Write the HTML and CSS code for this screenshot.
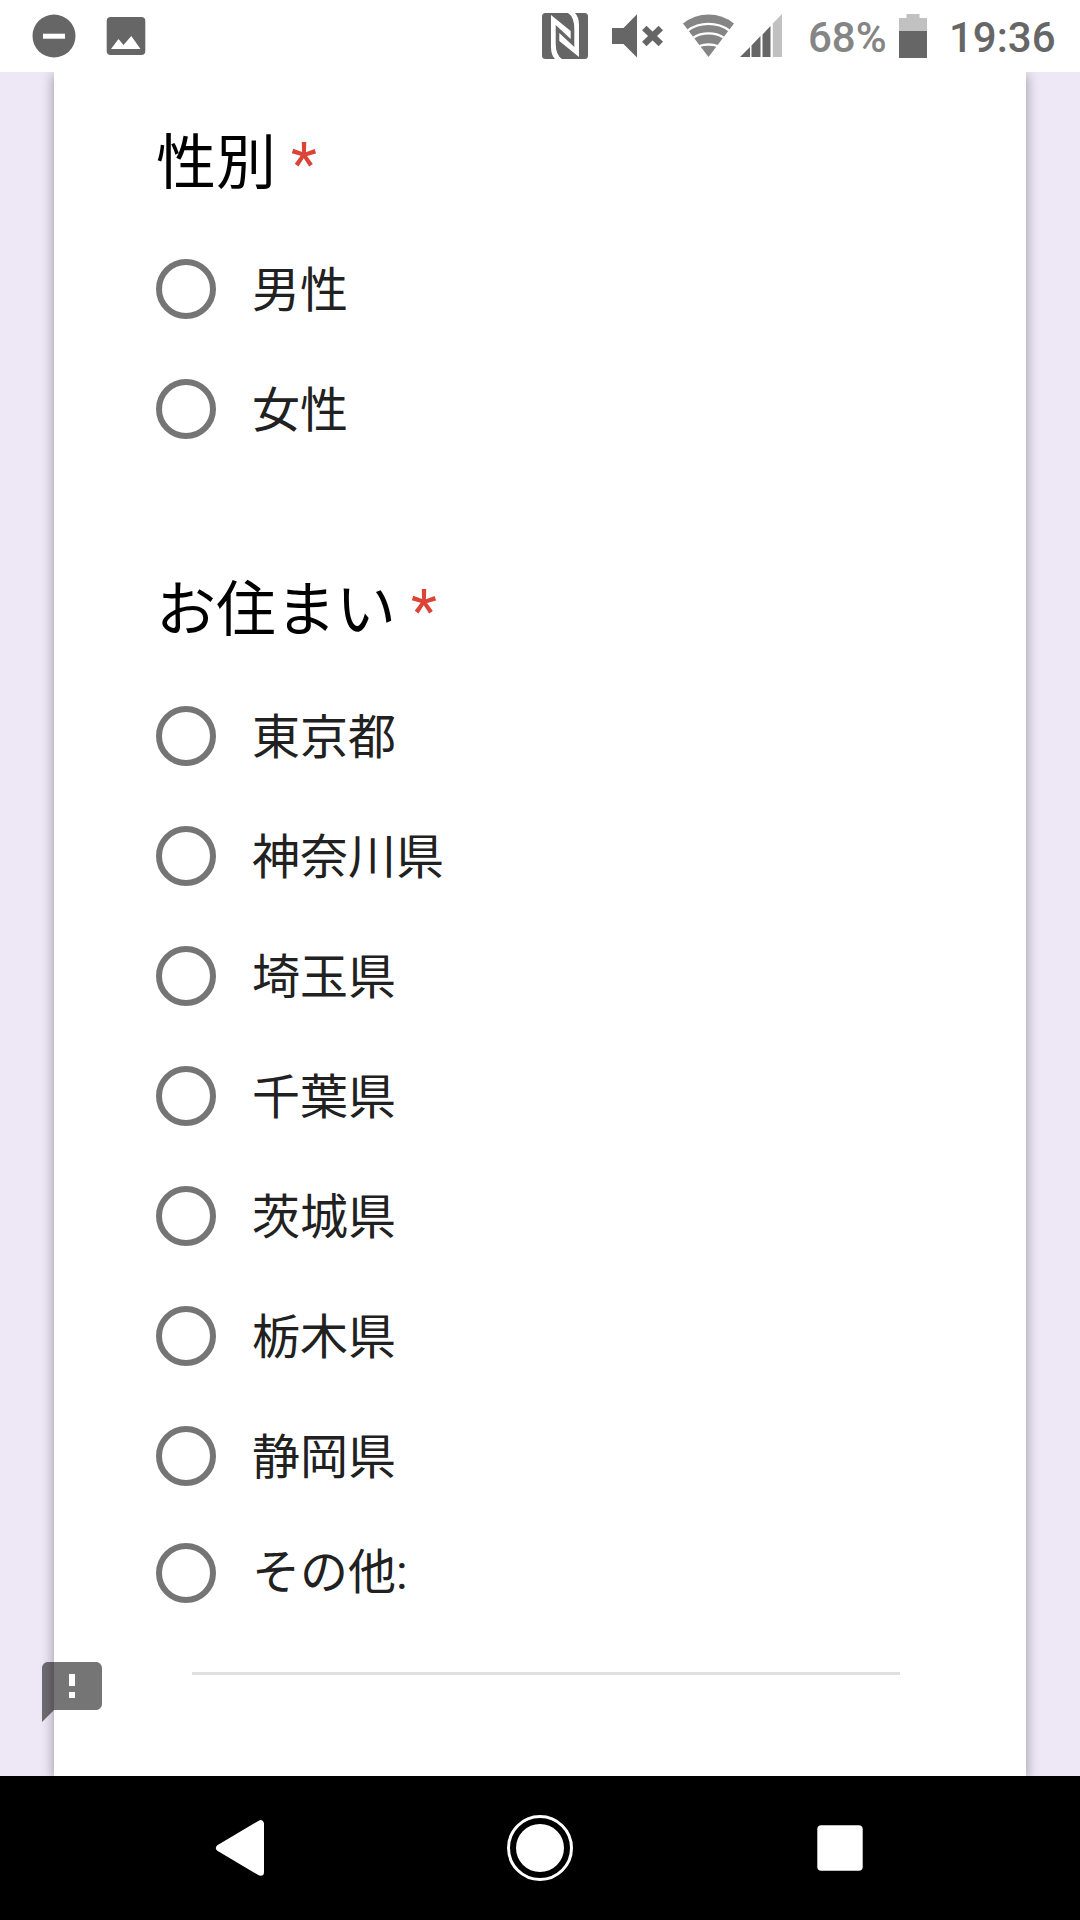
FILE: index.html
```html
<!DOCTYPE html>
<html lang="ja">
<head>
<meta charset="utf-8">
<title>アンケート</title>
<link rel="stylesheet" href="styles.css">
</head>
<body>
<header class="status">
  <svg class="dnd" width="44" height="44" viewBox="0 0 44 44"><circle cx="22" cy="22" r="21.5" fill="#666"/><path d="M11 19.7h22v5H11z" fill="#fff"/></svg>
  <svg class="photo" width="40" height="40" viewBox="0 0 40 40"><rect x=".7" y="1" width="38.6" height="38" rx="4" fill="#666"/><path d="M5 33l7.500-10 5 6L25.300 20 34.500 33z" fill="#fff"/></svg>
  <svg class="nfc" width="46" height="46" viewBox="0 0 46 46"><rect width="46" height="46" rx="3.5" fill="#666"/><path d="M9 2L28.700 18V26L13.700 12V30Q13.700 42 20 46H13Q9 42 9 34zM37 44L17.300 28V20L32.300 34V16Q32.300 4 26 0H33Q37 4 37 12z" fill="#fff"/></svg>
  <svg class="mute" width="52" height="44" viewBox="0 0 52 44"><path d="M0 14h11.500L25 .3V43.500L11.500 30H0z" fill="#666"/><path d="M32.300 14l16.500 16M48.800 14L32.300 30" stroke="#666" stroke-width="6.300"/></svg>
  <svg class="wifi" width="52" height="44" viewBox="0 0 52 44"><path d="M25.500 43L0 9.500Q11.500.5 25.500 .5T51 9.500z" fill="#858585"/><path d="M4.700 16.500Q13.500 9.800 25.500 9.800T46.300 16.500M10.500 23.500Q16.500 19.400 25.500 19.400T40.500 23.500M16.500 32Q20.500 30.500 25.500 30.500T34.500 32" fill="none" stroke="#fff" stroke-width="2.300"/></svg>
  <svg class="signal" width="42" height="43" viewBox="0 0 42 43"><path d="M0 43L10 33V43zM11.500 31.500L20.500 22V43h-9zM22.500 20.500L30.500 12V43h-8z" fill="#666"/><path d="M32.800 9.500L42 0V43h-9.200z" fill="#c1c1c1"/></svg>
  <span class="percent">68%</span>
  <svg class="battery" width="28" height="44" viewBox="0 0 28 44"><path d="M7.500 0h13v4H28v14H0V4h7.500z" fill="#c1c1c1"/><path d="M0 17h28v27H0z" fill="#666"/></svg>
  <span class="clock">19:36</span>
</header>
<main class="page">
  <form class="card">
    <section class="question">
      <h2 class="title">性別 <span class="required">*</span></h2>
      <div class="option"><span class="radio"></span><span class="label">男性</span></div>
      <div class="option"><span class="radio"></span><span class="label">女性</span></div>
    </section>
    <section class="question">
      <h2 class="title">お住まい <span class="required">*</span></h2>
      <div class="option"><span class="radio"></span><span class="label">東京都</span></div>
      <div class="option"><span class="radio"></span><span class="label">神奈川県</span></div>
      <div class="option"><span class="radio"></span><span class="label">埼玉県</span></div>
      <div class="option"><span class="radio"></span><span class="label">千葉県</span></div>
      <div class="option"><span class="radio"></span><span class="label">茨城県</span></div>
      <div class="option"><span class="radio"></span><span class="label">栃木県</span></div>
      <div class="option"><span class="radio"></span><span class="label">静岡県</span></div>
      <div class="option other"><span class="radio"></span><span>その他:</span></div>
      <div class="other-line"></div>
    </section>
  </form>
  <svg class="feedback" width="72" height="72" viewBox="0 0 24 24"><path d="M11 6h2v4h-2zM11 12h2v2h-2z" fill="#fff"/><path d="M20 2H4c-1.100 0-2 .9-2 2v18l4-4h14c1.100 0 2-.9 2-2V4c0-1.100-.9-2-2-2zm-7 12h-2v-2h2v2zm0-4h-2V6h2v4z" fill="#000" fill-opacity=".54"/></svg>
</main>
<nav class="nav">
  <svg width="66" height="66" viewBox="0 0 66 66"><path d="M12.500 33L53.500 8.700V57.300z" fill="#fff" stroke="#fff" stroke-width="7" stroke-linejoin="round"/></svg>
  <svg width="66" height="66" viewBox="0 0 66 66"><circle cx="33" cy="33" r="31.500" fill="none" stroke="#fff" stroke-width="3"/><circle cx="33" cy="33" r="24" fill="#fff"/></svg>
  <svg width="66" height="66" viewBox="0 0 66 66"><rect x="10.300" y="10.300" width="45.400" height="45.400" rx="4" fill="#fff"/></svg>
</nav>
</body>
</html>
```
FILE: styles.css
```css
* { box-sizing: border-box; }
body {
  margin: 0;
  width: 1080px;
  height: 1920px;
  display: flex;
  flex-direction: column;
  overflow: hidden;
  background: #ede7f6;
  font-family: Roboto, "Noto Sans CJK JP", sans-serif;
}
svg { display: block; flex: none; }

.status {
  position: relative;
  z-index: 1;
  flex: none;
  display: flex;
  align-items: flex-start;
  height: 72px;
  padding: 14px 0 0 32px;
  background: #fff;
  font-size: 42px;
  font-weight: 500;
  line-height: 48px;
  white-space: nowrap;
}
.photo { margin: 2px 0 0 30px; }
.nfc { margin: -1px 0 0 396px; }
.mute { margin-left: 24px; }
.wifi { margin-left: 19px; }
.signal { margin-left: 5px; }
.percent { width: 91px; margin-left: 26px; color: #858585; }
.clock { margin-left: 22px; color: #666; }

.page {
  position: relative;
  flex: 1;
  padding: 0 54px;
  overflow: hidden;
}
.card {
  height: 100%;
  padding: 43px 102px 0;
  background: #fff;
  box-shadow: 0 3px 12px rgba(0, 0, 0, .37);
}
.question { margin-bottom: 93px; }
.title {
  height: 114px;
  margin: 0;
  padding-top: 4px;
  font-size: 60px;
  font-weight: 400;
  line-height: 90px;
  color: #000;
}
.required { color: #db4437; }
.option {
  display: flex;
  align-items: center;
  gap: 36px;
  height: 120px;
  font-size: 48px;
  line-height: 72px;
  color: #212121;
}
.label { padding-top: 3px; }
.radio {
  width: 60px;
  height: 60px;
  border: 6px solid #757575;
  border-radius: 50%;
}
.other { height: 114px; }
.other-line {
  height: 3px;
  margin: 42px 24px 0 36px;
  background: #e0e0e0;
}
.feedback { position: absolute; left: 36px; top: 1584px; }

.nav {
  flex: none;
  display: flex;
  align-items: center;
  justify-content: space-between;
  height: 144px;
  padding: 0 207px;
  background: #000;
}
```
